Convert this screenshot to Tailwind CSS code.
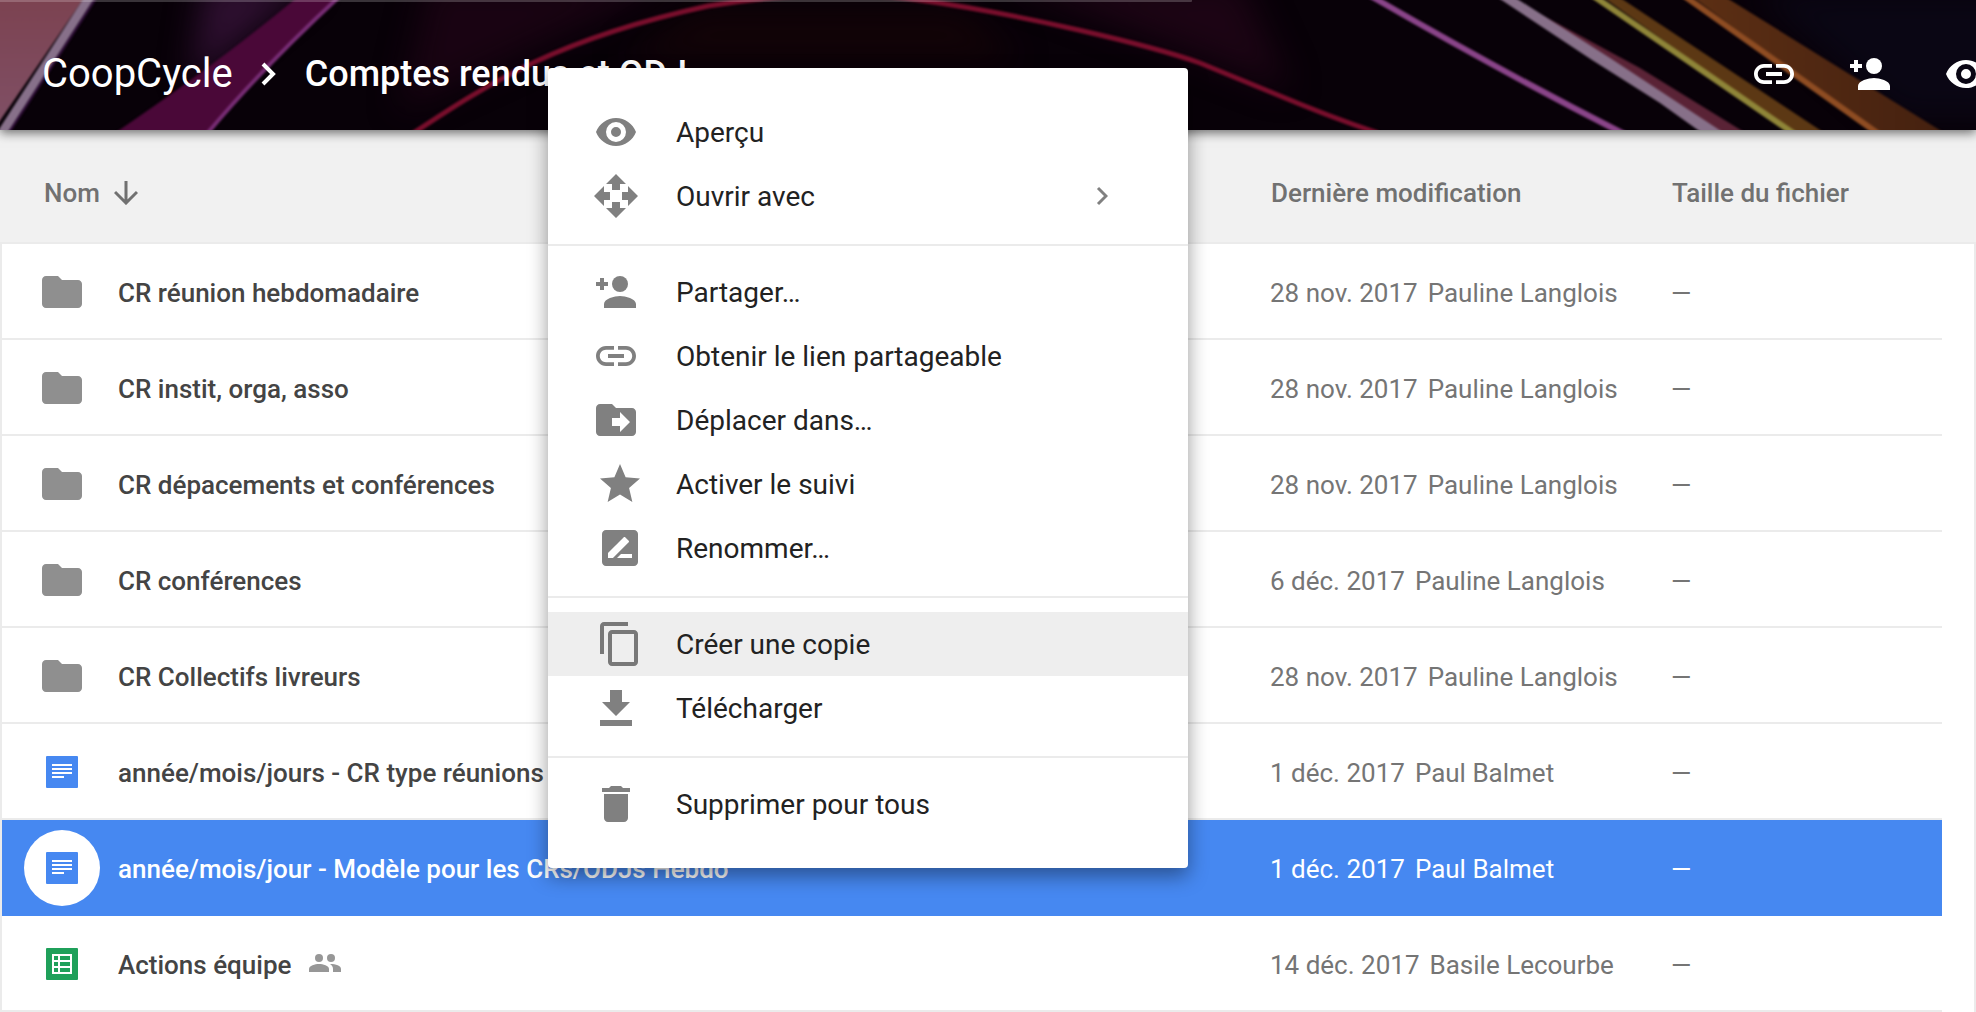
<!DOCTYPE html>
<html lang="fr">

<head>
  <meta charset="UTF-8" />
  <meta name="viewport" content="width=device-width, initial-scale=1.0" />
  <title>Comptes rendus et ODJ</title>
  <script src="https://cdn.jsdelivr.net/npm/@tailwindcss/browser@4"></script>
</head>

<body class="relative min-h-screen overflow-hidden bg-[#f1f1f1] font-['Roboto',sans-serif] text-[26px] leading-8">

  <!-- Icônes partagées -->
  <svg class="hidden">
    <symbol id="i-folder" viewBox="0 0 24 24">
      <path d="M10 4H4c-1.1 0-2 .9-2 2v12c0 1.1.9 2 2 2h16c1.1 0 2-.9 2-2V8c0-1.1-.9-2-2-2h-8l-2-2z" />
    </symbol>
    <symbol id="i-eye" viewBox="0 0 24 24">
      <path fill-rule="evenodd" d="M12 5C7.5 5 3.6 7.900 2 12c1.600 4.100 5.500 7 10 7s8.400-2.900 10-7c-1.600-4.100-5.500-7-10-7zm0 2a5 5 0 1 1 0 10 5 5 0 0 1 0-10zm0 2.500a2.500 2.500 0 1 0 0 5 2.500 2.500 0 0 0 0-5z" />
    </symbol>
    <symbol id="i-link" viewBox="0 0 24 24">
      <path d="M3.900 12c0-1.710 1.390-3.100 3.100-3.100h4V7H7c-2.760 0-5 2.240-5 5s2.240 5 5 5h4v-1.900H7c-1.710 0-3.100-1.390-3.100-3.100zM8 13h8v-2H8v2zm9-6h-4v1.900h4c1.710 0 3.100 1.390 3.100 3.100s-1.390 3.100-3.100 3.100h-4V17h4c2.760 0 5-2.240 5-5s-2.240-5-5-5z" />
    </symbol>
    <symbol id="i-person-add" viewBox="0 0 24 24">
      <circle cx="14" cy="8" r="4" />
      <path d="M14 14c-2.670 0-8 1.340-8 4v2h16v-2c0-2.660-5.330-4-8-4zM4 5h2v2h2v2H6v2H4V9H2V7h2z" />
    </symbol>
    <symbol id="i-doc" viewBox="0 0 32 32">
      <rect width="32" height="32" rx="1" fill="#4688f1" />
      <path fill="#fff" d="M6 8h20v2H6zM6 12h20v2H6zM6 16h20v2H6zM6 20h12v2H6z" />
    </symbol>
  </svg>

  <!-- Bandeau -->
  <header class="relative z-10 h-[130px] bg-[#080108] text-white shadow-[0_3px_10px_rgba(0,0,0,0.55)]">
    <svg class="absolute inset-0 h-full w-full" viewBox="0 0 1976 130" preserveAspectRatio="xMidYMid slice" aria-hidden="true">
      <defs>
        <filter id="soft" x="-5%" y="-20%" width="110%" height="140%" color-interpolation-filters="sRGB"><feGaussianBlur stdDeviation="1" /></filter>
        <filter id="haze" x="-60%" y="-80%" width="220%" height="260%" color-interpolation-filters="sRGB"><feGaussianBlur stdDeviation="16" /></filter>
        <linearGradient id="pink" x1="0" y1="0" x2="0" y2="1">
          <stop offset="0" stop-color="#7c4250" />
          <stop offset="1" stop-color="#805066" />
        </linearGradient>
        <linearGradient id="orange" x1="0" y1="0" x2="1" y2="0">
          <stop offset="0" stop-color="#5c2f14" />
          <stop offset="1" stop-color="#452110" />
        </linearGradient>
      </defs>
      <rect width="1976" height="130" fill="#080108" />
      <path d="M205 -20h110L190 85z" fill="#2e0f30" filter="url(#haze)" />
      <path d="M430 -20h250L400 110z" fill="#190312" filter="url(#haze)" />
      <path d="M700 10h260l60 50H620z" fill="#120307" filter="url(#haze)" />
      <path d="M1000 -20h240l50 110z" fill="#1c0414" filter="url(#haze)" />
      <path d="M1750 -10h260v130h-110z" fill="#0a0614" filter="url(#haze)" />
      <g filter="url(#soft)">
        <path d="M-5 -5H86L-5 128z" fill="url(#pink)" />
        <path d="M91 -5L0 136" stroke="#87708a" stroke-width="9" />
        <path d="M98 -5L8 134" stroke="#35103f" stroke-width="2" />
        <path d="M300 -5H340Q262 68 206 135H112Q220 62 300 -5z" fill="#4a0838" />
        <path d="M341 -5Q262 68 206 135" stroke="#772c74" stroke-width="4" fill="none" />
        <path d="M412 134C490 82 560 38 708 6Q830 -14 919 0C1020 14 1150 45 1200 63L1273 93Q1330 117 1378 133" stroke="#780e2c" stroke-width="5" fill="none" />
        <path d="M1369 -5Q1502 72 1626 135" stroke="#8a4489" stroke-width="6" fill="none" />
        <path d="M1514 0L1640 68L1744 132H1718z" fill="#5a2336" />
        <path d="M1494 -5H1511L1610 58L1724 133H1702L1660 103L1592 60z" fill="#877089" />
        <path d="M1600 -5H1616L1826 134H1795z" fill="#5c3814" />
        <path d="M1592 -5L1796 135" stroke="#8f8538" stroke-width="6" />
        <path d="M1690 -5H1722L1946 134H1878z" fill="url(#orange)" />
        <path d="M1683 -5L1880 135" stroke="#8e4c22" stroke-width="6" />
      </g>
      <path d="M0 0H1192v1q0 1-1 1H0z" fill="#fff" fill-opacity=".2" />
    </svg>

    <div class="relative flex h-full items-center overflow-hidden pt-[18px] pl-[42px]">
      <nav class="flex min-w-0 flex-1 items-center whitespace-nowrap" aria-label="Fil d’Ariane">
        <a href="#" class="text-[40px] leading-12">CoopCycle</a>
        <svg class="mx-7 h-6 w-4 shrink-0" viewBox="0 0 16 24" fill="none" stroke="currentColor" stroke-width="4" aria-hidden="true"><path d="M2 2l10 10L2 22" /></svg>
        <a href="#" class="text-[36px] leading-12 font-medium">Comptes rendus et ODJ</a>
      </nav>
      <div class="-mr-[14px] flex shrink-0 gap-12">
        <button type="button" aria-label="Obtenir le lien"><svg class="size-12 fill-white"><use href="#i-link" /></svg></button>
        <button type="button" aria-label="Partager"><svg class="size-12 fill-white"><use href="#i-person-add" /></svg></button>
        <button type="button" aria-label="Aperçu"><svg class="size-12 fill-white"><use href="#i-eye" /></svg></button>
      </div>
    </div>
  </header>

  <!-- Liste des fichiers -->
  <table class="w-full table-fixed border-separate border-spacing-0 text-left whitespace-nowrap">
    <thead class="text-[#717171]">
      <tr class="h-[114px]">
        <th class="border-b-2 border-[#ebebeb] pt-[14px] pl-11 font-medium">
          <button type="button" class="flex items-center gap-[14px]">
            Nom
            <svg class="size-6" viewBox="0 0 24 24" fill="none" stroke="currentColor" stroke-width="3" aria-hidden="true"><path d="M12 0v22M1 11l11 11 11-11" /></svg>
          </button>
        </th>
        <th class="w-[401px] border-b-2 border-[#ebebeb] pt-[14px] pl-px font-medium">Dernière modification</th>
        <th class="w-[271px] border-b-2 border-[#ebebeb] pt-[14px] pl-px font-medium">Taille du fichier</th>
        <th class="w-[34px] border-b-2 border-[#ebebeb]"></th>
      </tr>
    </thead>
    <tbody class="bg-white text-[#757575]">
      <tr class="h-24">
        <td class="border-b-2 border-l-2 border-[#ebebeb] pt-0.5 pl-[22px]">
          <div class="flex items-center gap-[18px]">
            <span class="flex w-19 justify-center"><svg class="size-12 fill-[#8f8f8f]"><use href="#i-folder" /></svg></span>
            <a href="#" class="pt-0.5 font-medium text-[#444]">CR réunion hebdomadaire</a>
          </div>
        </td>
        <td class="border-b-2 border-[#ebebeb] pt-1"><span class="mr-[10px]">28 nov. 2017</span><span>Pauline Langlois</span></td>
        <td class="border-b-2 border-[#ebebeb] pt-1">—</td>
        <td class="border-r-2 border-[#ebebeb]"></td>
      </tr>
      <tr class="h-24">
        <td class="border-b-2 border-l-2 border-[#ebebeb] pt-0.5 pl-[22px]">
          <div class="flex items-center gap-[18px]">
            <span class="flex w-19 justify-center"><svg class="size-12 fill-[#8f8f8f]"><use href="#i-folder" /></svg></span>
            <a href="#" class="pt-0.5 font-medium text-[#444]">CR instit, orga, asso</a>
          </div>
        </td>
        <td class="border-b-2 border-[#ebebeb] pt-1"><span class="mr-[10px]">28 nov. 2017</span><span>Pauline Langlois</span></td>
        <td class="border-b-2 border-[#ebebeb] pt-1">—</td>
        <td class="border-r-2 border-[#ebebeb]"></td>
      </tr>
      <tr class="h-24">
        <td class="border-b-2 border-l-2 border-[#ebebeb] pt-0.5 pl-[22px]">
          <div class="flex items-center gap-[18px]">
            <span class="flex w-19 justify-center"><svg class="size-12 fill-[#8f8f8f]"><use href="#i-folder" /></svg></span>
            <a href="#" class="pt-0.5 font-medium text-[#444]">CR dépacements et conférences</a>
          </div>
        </td>
        <td class="border-b-2 border-[#ebebeb] pt-1"><span class="mr-[10px]">28 nov. 2017</span><span>Pauline Langlois</span></td>
        <td class="border-b-2 border-[#ebebeb] pt-1">—</td>
        <td class="border-r-2 border-[#ebebeb]"></td>
      </tr>
      <tr class="h-24">
        <td class="border-b-2 border-l-2 border-[#ebebeb] pt-0.5 pl-[22px]">
          <div class="flex items-center gap-[18px]">
            <span class="flex w-19 justify-center"><svg class="size-12 fill-[#8f8f8f]"><use href="#i-folder" /></svg></span>
            <a href="#" class="pt-0.5 font-medium text-[#444]">CR conférences</a>
          </div>
        </td>
        <td class="border-b-2 border-[#ebebeb] pt-1"><span class="mr-[10px]">6 déc. 2017</span><span>Pauline Langlois</span></td>
        <td class="border-b-2 border-[#ebebeb] pt-1">—</td>
        <td class="border-r-2 border-[#ebebeb]"></td>
      </tr>
      <tr class="h-24">
        <td class="border-b-2 border-l-2 border-[#ebebeb] pt-0.5 pl-[22px]">
          <div class="flex items-center gap-[18px]">
            <span class="flex w-19 justify-center"><svg class="size-12 fill-[#8f8f8f]"><use href="#i-folder" /></svg></span>
            <a href="#" class="pt-0.5 font-medium text-[#444]">CR Collectifs livreurs</a>
          </div>
        </td>
        <td class="border-b-2 border-[#ebebeb] pt-1"><span class="mr-[10px]">28 nov. 2017</span><span>Pauline Langlois</span></td>
        <td class="border-b-2 border-[#ebebeb] pt-1">—</td>
        <td class="border-r-2 border-[#ebebeb]"></td>
      </tr>
      <tr class="h-24">
        <td class="border-b-2 border-l-2 border-[#ebebeb] pt-0.5 pl-[22px]">
          <div class="flex items-center gap-[18px]">
            <span class="flex w-19 justify-center"><svg class="size-8"><use href="#i-doc" /></svg></span>
            <a href="#" class="pt-0.5 font-medium text-[#444]">année/mois/jours - CR type réunions</a>
          </div>
        </td>
        <td class="border-b-2 border-[#ebebeb] pt-1"><span class="mr-[10px]">1 déc. 2017</span><span>Paul Balmet</span></td>
        <td class="border-b-2 border-[#ebebeb] pt-1">—</td>
        <td class="border-r-2 border-[#ebebeb]"></td>
      </tr>
      <!-- Ligne sélectionnée -->
      <tr class="h-24 text-white" aria-selected="true">
        <td class="border-l-2 border-[#ebebeb] bg-[#4688f1] pl-[22px]">
          <div class="flex items-center gap-[18px]">
            <span class="flex size-19 items-center justify-center rounded-full bg-white"><svg class="size-8"><use href="#i-doc" /></svg></span>
            <a href="#" class="pt-0.5 font-medium">année/mois/jour - Modèle pour les CRs/ODJs Hebdo</a>
          </div>
        </td>
        <td class="bg-[#4688f1] pt-0.5"><span class="mr-[10px]">1 déc. 2017</span><span>Paul Balmet</span></td>
        <td class="bg-[#4688f1] pt-0.5">—</td>
        <td class="border-r-2 border-[#ebebeb]"></td>
      </tr>
      <tr class="h-24">
        <td class="border-b-2 border-l-2 border-[#ebebeb] pt-0.5 pl-[22px]">
          <div class="flex items-center gap-[18px]">
            <span class="flex w-19 justify-center">
              <svg class="size-8" viewBox="0 0 32 32" aria-hidden="true">
                <rect width="32" height="32" rx="1" fill="#1fa05a" />
                <path fill="#fff" fill-rule="evenodd" d="M6 6h20v20H6zM8 8v4h4V8zM14 8v4h10V8zM8 14v4h4v-4zM14 14v4h10v-4zM8 20v4h4v-4zM14 20v4h10v-4z" />
              </svg>
            </span>
            <a href="#" class="pt-0.5 font-medium text-[#444]">Actions équipe</a>
            <svg class="mb-0.5 h-[18px] w-8 fill-[#979797]" viewBox="0 0 32 18" role="img" aria-label="Partagé">
              <circle cx="10" cy="4" r="4" />
              <circle cx="22" cy="4" r="4" />
              <path d="M10 10c-4 0-10 1.500-10 5v3h20v-3c0-3.500-6-5-10-5zM21 10c2 1 3 3 3 5v3h8v-3c0-3.500-5-5-11-5z" />
            </svg>
          </div>
        </td>
        <td class="border-b-2 border-[#ebebeb] pt-1"><span class="mr-[10px]">14 déc. 2017</span><span>Basile Lecourbe</span></td>
        <td class="border-b-2 border-[#ebebeb] pt-1">—</td>
        <td class="border-r-2 border-[#ebebeb]"></td>
      </tr>
    </tbody>
  </table>

  <!-- Menu contextuel -->
  <div role="menu" class="absolute top-[68px] left-[548px] z-20 w-[640px] rounded bg-white py-8 text-[28px] text-[#222] shadow-[0_8px_20px_rgba(0,0,0,0.4)]">
    <button type="button" role="menuitem" class="flex h-16 w-full items-center gap-9 pl-11 text-left">
      <svg class="size-12 fill-[#808080]"><use href="#i-eye" /></svg>
      <span class="pt-0.5">Aperçu</span>
    </button>
    <button type="button" role="menuitem" class="flex h-16 w-full items-center gap-9 pr-20 pl-11 text-left">
      <svg class="size-12 fill-[#808080]" viewBox="0 0 24 24"><path d="M10 9h4V6h3l-5-5-5 5h3v3zm-1 1H6V7l-5 5 5 5v-3h3v-4zm14 2l-5-5v3h-3v4h3v3l5-5zm-9 3h-4v3H7l5 5 5-5h-3v-3z" /></svg>
      <span class="pt-0.5">Ouvrir avec</span>
      <svg class="ml-auto h-5 w-3" viewBox="0 0 12 20" fill="none" stroke="#808080" stroke-width="3"><path d="M2 2l8 8-8 8" /></svg>
    </button>
    <hr class="mt-4 mb-[14px] border-t-2 border-[#ebebeb]" />
    <button type="button" role="menuitem" class="flex h-16 w-full items-center gap-9 pl-11 text-left">
      <svg class="size-12 fill-[#808080]"><use href="#i-person-add" /></svg>
      <span class="pt-0.5">Partager…</span>
    </button>
    <button type="button" role="menuitem" class="flex h-16 w-full items-center gap-9 pl-11 text-left">
      <svg class="size-12 fill-[#808080]"><use href="#i-link" /></svg>
      <span class="pt-0.5">Obtenir le lien partageable</span>
    </button>
    <button type="button" role="menuitem" class="flex h-16 w-full items-center gap-9 pl-11 text-left">
      <svg class="size-12 fill-[#808080]" viewBox="0 0 24 24"><path fill-rule="evenodd" d="M10 4H4c-1.100 0-2 .9-2 2v12c0 1.100.9 2 2 2h16c1.100 0 2-.9 2-2V8c0-1.100-.9-2-2-2h-8l-2-2zM14 18v-3h-4v-4h4V8l5 5z" /></svg>
      <span class="pt-0.5">Déplacer dans…</span>
    </button>
    <button type="button" role="menuitem" class="flex h-16 w-full items-center gap-8 pl-12 text-left">
      <svg class="size-12 fill-[#808080]" viewBox="0 0 24 24"><path d="M12 17.270L18.180 21l-1.640-7.030L22 9.240l-7.190-.61L12 2 9.190 8.630 2 9.240l5.460 4.730L5.820 21z" /></svg>
      <span class="pt-0.5">Activer le suivi</span>
    </button>
    <button type="button" role="menuitem" class="flex h-16 w-full items-center gap-8 pl-12 text-left">
      <svg class="size-12 fill-[#808080]" viewBox="0 0 24 24"><path fill-rule="evenodd" d="M19 3H5c-1.100 0-2 .9-2 2v14c0 1.100.9 2 2 2h14c1.100 0 2-.9 2-2V5c0-1.100-.9-2-2-2zM6 17v-2.500l7.880-7.880c.2-.2.510-.2.710 0l1.770 1.770c.2.2.2.510 0 .710L8.470 17H6zm12 0h-7.500l2-2H18v2z" /></svg>
      <span class="pt-0.5">Renommer…</span>
    </button>
    <hr class="mt-4 mb-[14px] border-t-2 border-[#ebebeb]" />
    <button type="button" role="menuitem" class="flex h-16 w-full items-center gap-8 bg-[#eee] pl-12 text-left">
      <svg class="size-12 fill-[#787878]" viewBox="0 0 24 24"><path d="M16 1H4c-1.100 0-2 .9-2 2v14h2V3h12V1zm3 4H8c-1.100 0-2 .9-2 2v14c0 1.100.9 2 2 2h11c1.100 0 2-.9 2-2V7c0-1.100-.9-2-2-2zm0 16H8V7h11v14z" /></svg>
      <span class="pt-0.5">Créer une copie</span>
    </button>
    <button type="button" role="menuitem" class="flex h-16 w-full items-center gap-9 pl-11 text-left">
      <svg class="size-12 fill-[#808080]" viewBox="0 0 24 24"><path d="M19 9h-4V3H9v6H5l7 7 7-7zM4 18v3h16v-3z" /></svg>
      <span class="pt-0.5">Télécharger</span>
    </button>
    <hr class="mt-4 mb-[14px] border-t-2 border-[#ebebeb]" />
    <button type="button" role="menuitem" class="flex h-16 w-full items-center gap-9 pl-11 text-left">
      <svg class="size-12 fill-[#808080]" viewBox="0 0 24 24"><path d="M6 19c0 1.100.9 2 2 2h8c1.100 0 2-.9 2-2V7H6v12zM19 4h-3.500l-1-1h-5l-1 1H5v2h14V4z" /></svg>
      <span class="pt-0.5">Supprimer pour tous</span>
    </button>
  </div>
</body>

</html>
